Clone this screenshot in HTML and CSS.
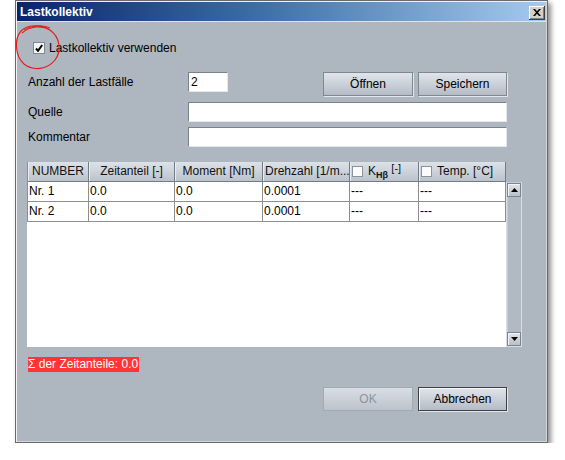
FILE: index.html
```html
<!DOCTYPE html>
<html lang="de">
<head>
<meta charset="utf-8">
<title>Lastkollektiv</title>
<link rel="stylesheet" href="styles.css">
</head>
<body>
<div class="window">
  <div class="titlebar">
    <span class="title">Lastkollektiv</span>
    <span class="close"><svg width="8" height="7" viewBox="0 0 8 7"><path d="M0 0h2l2 2.2L6 0h2L5 3.5 8 7H6L4 4.8 2 7H0l3-3.5z" fill="#000"/></svg></span>
  </div>
  <div class="content">
    <div class="check-row">
      <span class="cb cb-main"><svg width="8" height="8" viewBox="0 0 8 8"><path d="M1 4.5 L3 6.8 L7.2 1" stroke="#000" stroke-width="2" fill="none"/></svg></span>
      <span>Lastkollektiv verwenden</span>
    </div>
    <div class="row row-count">
      <span class="label">Anzahl der Lastfälle</span>
      <div class="field field-small">2</div>
      <div class="spacer"></div>
      <span class="btn btn-90">Öffnen</span>
      <span class="btn btn-89">Speichern</span>
    </div>
    <div class="row row-q">
      <span class="label">Quelle</span>
      <div class="field field-wide"></div>
    </div>
    <div class="row row-k">
      <span class="label">Kommentar</span>
      <div class="field field-wide"></div>
    </div>
    <div class="pane">
      <div class="viewport">
        <div class="grid head">
          <div class="hc c-center">NUMBER</div>
          <div class="hc c-center">Zeitanteil [-]</div>
          <div class="hc c-center">Moment [Nm]</div>
          <div class="hc">Drehzahl [1/m...</div>
          <div class="hc hc-check"><span class="cb cb-head"></span><span class="khb">K<sub>Hβ</sub> <sup>[-]</sup></span></div>
          <div class="hc hc-check"><span class="cb cb-head"></span><span>Temp. [°C]</span></div>
        </div>
        <div class="grid body-row">
          <div class="dc">Nr. 1</div>
          <div class="dc">0.0</div>
          <div class="dc">0.0</div>
          <div class="dc">0.0001</div>
          <div class="dc">---</div>
          <div class="dc">---</div>
        </div>
        <div class="grid body-row">
          <div class="dc">Nr. 2</div>
          <div class="dc">0.0</div>
          <div class="dc">0.0</div>
          <div class="dc">0.0001</div>
          <div class="dc">---</div>
          <div class="dc">---</div>
        </div>
      </div>
      <div class="scrollbar">
        <span class="sb-btn"><svg width="7" height="4" viewBox="0 0 7 4"><path d="M3.5 0 L7 4 H0z" fill="#000"/></svg></span>
        <span class="sb-track"></span>
        <span class="sb-btn"><svg width="7" height="4" viewBox="0 0 7 4"><path d="M0 0 H7 L3.5 4z" fill="#000"/></svg></span>
      </div>
    </div>
    <div class="sum-row"><span class="sum">Σ der Zeitanteile: 0.0</span></div>
    <div class="actions">
      <span class="btn btn-90 btn-disabled">OK</span>
      <span class="btn btn-89 btn-default">Abbrechen</span>
    </div>
  </div>
</div>
<svg class="annotation" width="70" height="75" viewBox="0 0 70 75">
  <path d="M51 31 C44 24 28 24 21 31 C14 39 15 56 24 64 C33 71 47 70 55 60 C62 51 60 37 50 30 C42 25 30 26 22 33" fill="none" stroke="#e41f1f" stroke-width="1.2"/>
  <path d="M24 30 C32 25 44 25 50 28" fill="none" stroke="#e41f1f" stroke-width="1"/>
</svg>
</body>
</html>
```
FILE: styles.css
```css
body {
  margin: 0;
  background: #ffffff;
  font-family: "Liberation Sans", Arial, sans-serif;
  font-size: 12px;
  color: #000;
  position: relative;
}

.window {
  margin-left: 15px;
  width: 533px;
  height: 443px;
  box-sizing: border-box;
  border: 1px solid #6a6a6a;
  padding: 1px;
  background: #aeb6c0;
  box-shadow: inset 1px 1px 0 #f2f2f2, inset -1px -1px 0 #d6d6d6, 3px 3px 5px rgba(0, 0, 0, 0.45);
  display: flex;
  flex-direction: column;
}

.titlebar {
  height: 19px;
  border-bottom: 1px solid #dfe4ea;
  background: linear-gradient(to right, #0a246a, #3a6ea5 45%, #a6caf0);
  display: flex;
  align-items: center;
  justify-content: space-between;
  padding: 0 1px 0 3px;
}

.title {
  color: #fff;
  font-weight: bold;
  font-size: 12px;
}

.close {
  width: 16px;
  height: 14px;
  box-sizing: border-box;
  background: #d4d0c8;
  display: flex;
  align-items: center;
  justify-content: center;
  box-shadow: inset -1px -1px 0 #404040, inset 1px 1px 0 #ffffff, inset -2px -2px 0 #808080;
  margin-top: 2px;
}

.content {
  flex: 1;
  padding: 18px 39px 0 11px;
  display: flex;
  flex-direction: column;
}

.check-row {
  height: 16px;
  display: flex;
  align-items: center;
  gap: 4px;
  padding-left: 5px;
}

.cb {
  box-sizing: border-box;
  background: #f4f5f7;
  border: 1px solid #808891;
  display: inline-flex;
  align-items: center;
  justify-content: center;
}

.cb-main {
  width: 12px;
  height: 12px;
}

.row {
  display: flex;
  align-items: flex-start;
}

.row-count { margin-top: 16px; }
.row-q { margin-top: 6px; }
.row-k { margin-top: 5px; }

.label {
  width: 160px;
  line-height: 20px;
  flex: none;
}

.field {
  height: 20px;
  box-sizing: border-box;
  background: #fff;
  border: 1px solid;
  border-color: #7a818a #e4e8ec #e4e8ec #7a818a;
  line-height: 18px;
  padding-left: 2px;
}

.field-small { width: 40px; }
.field-wide { width: 319px; }

.spacer { flex: 1; }

.btn {
  height: 24px;
  box-sizing: border-box;
  border: 1px solid #7f8791;
  box-shadow: 1px 1px 0 #e3e7ec;
  background: linear-gradient(#e0e5eb, #b4bcc6);
  display: flex;
  align-items: center;
  justify-content: center;
  font-size: 12px;
}

.btn-90 { width: 90px; }
.btn-89 { width: 89px; margin-left: 5px; }

.btn-disabled {
  color: #8c939c;
  border-color: #a1a9b2;
  box-shadow: none;
  background: linear-gradient(#d9dee5, #bcc3cc);
}

.btn-default {
  border-color: #3c3f44;
  box-shadow: inset 1px 1px 0 #f6f8fa, 1px 1px 0 #e3e7ec;
}

.pane {
  margin-top: 15px;
  margin-left: -1px;
  width: 495px;
  height: 185px;
  display: flex;
}

.viewport {
  width: 479px;
  background: #fff;
}

.grid {
  display: grid;
  grid-template-columns: 61px 86px 88px 87px 69px 87px;
  border-left: 1px solid #8a9098;
}

.head {
  height: 20px;
  background: linear-gradient(#dde2e8, #b9c1cb);
}

.hc {
  box-sizing: border-box;
  border-right: 1px solid #737b85;
  border-bottom: 1px solid #737b85;
  box-shadow: inset 1px 0 0 #e9edf1;
  height: 20px;
  line-height: 19px;
  white-space: nowrap;
  overflow: hidden;
  padding-left: 2px;
  color: #111;
}

.c-center {
  text-align: center;
  padding-left: 0;
}

.hc-check {
  display: flex;
  align-items: center;
  gap: 5px;
}

.cb-head {
  width: 11px;
  height: 11px;
  background: #fbfbfc;
  border-color: #8b939d;
  flex: none;
}

.khb {
  line-height: 19px;
}

.khb sub {
  font-size: 9px;
  font-weight: bold;
  vertical-align: -3px;
}

.khb sup {
  font-size: 11px;
  vertical-align: 3px;
}

.body-row {
  height: 20px;
}

.dc {
  box-sizing: border-box;
  border-right: 1px solid #8e8e8e;
  border-bottom: 1px solid #8e8e8e;
  height: 20px;
  line-height: 19px;
  padding-left: 1px;
  white-space: nowrap;
  overflow: hidden;
}

.scrollbar {
  width: 16px;
  box-sizing: border-box;
  margin-top: 20px;
  border: 1px solid #d9dee4;
  border-top-color: #c6ccd3;
  background: #b1b9c3;
  display: flex;
  flex-direction: column;
}

.sb-btn {
  height: 14px;
  box-sizing: border-box;
  border: 1px solid #7c848e;
  box-shadow: inset 1px 1px 0 #f2f4f6;
  background: linear-gradient(#e1e5eb, #b7bfc9);
  display: flex;
  align-items: center;
  justify-content: center;
}

.sb-track {
  flex: 1;
  border-left: 1px solid #c6ccd4;
}

.sum-row {
  margin-top: 10px;
  display: flex;
}

.sum {
  background: #ff3434;
  color: #fff;
  height: 15px;
  line-height: 15px;
  padding: 0 1px 0 0;
}

.actions {
  margin-top: 15px;
  display: flex;
  justify-content: flex-end;
}

.annotation {
  position: absolute;
  left: 0;
  top: 0;
  pointer-events: none;
}
```
